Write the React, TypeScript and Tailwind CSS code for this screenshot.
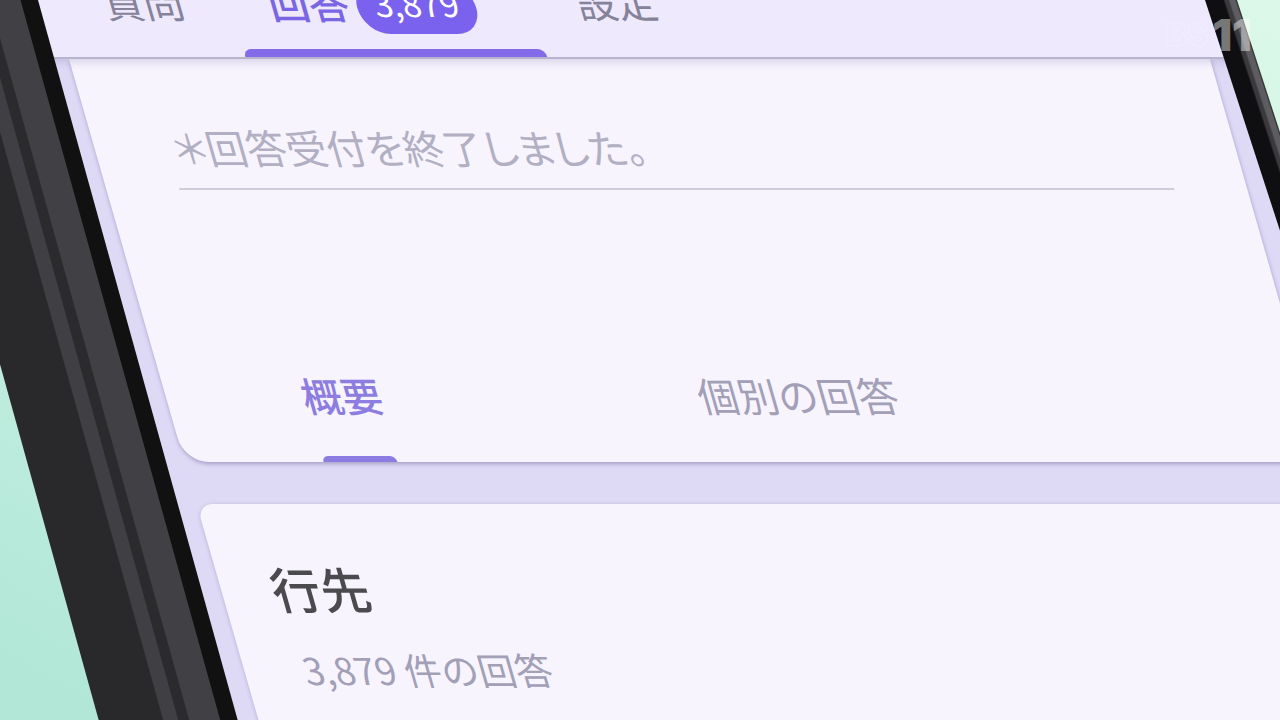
import React, { useState } from 'react'

interface Tab {
  id: string
  label: string
}

const summaryTab: Tab = { id: 'summary', label: '概要' }
const individualTab: Tab = { id: 'individual', label: '個別の回答' }

const LeftFrame: React.FC = () => {
  return (
    <div
      className="z-20 -ml-[101px] w-[139px] shrink-0 origin-top-left skew-x-[15.5deg] bg-[linear-gradient(90deg,#29282b_64px,#403f43_65px_79px,#2b2a2d_80px_90px,#414045_91px_121px,#111111_122px)]"
      aria-hidden="true"
    ></div>
  )
}

const RightFrame: React.FC = () => {
  return (
    <div
      className="z-20 mr-[43px] w-8 shrink-0 origin-top-left skew-x-[18deg] bg-[linear-gradient(90deg,#0f0e10_18px,#3b393d_20px_23px,#5d5c61_25px_30px,#39383b_31px)]"
      aria-hidden="true"
    ></div>
  )
}

const App: React.FC = () => {
  const [page, setPage] = useState('answers')
  const [view, setView] = useState('summary')

  return (
    <main className="relative flex h-screen w-full overflow-hidden bg-linear-to-tr from-[#b2e7d8] from-5% via-[#c8f1e2] via-40% to-[#dbf8e8] font-['Noto_Sans_CJK_JP','Noto_Sans',sans-serif]">
      <LeftFrame />

      {/* スマホの画面 */}
      <div className="z-10 -ml-2 -mr-4 flex min-w-0 flex-1 origin-top-left skew-x-[16deg] flex-col self-start bg-[#dedaf6]">
        <header className="relative z-10 flex h-[59px] items-end border-b-2 border-[#b8b4d0] bg-[#eee9fd] pl-[72px] text-[40px] leading-[48px] whitespace-nowrap shadow-[0_3px_8px_rgba(120,110,160,0.25)]">
          <button type="button" onClick={() => setPage('questions')} className="mb-8 text-[#85829a]">
            質問
          </button>
          <button
            type="button"
            onClick={() => setPage('answers')}
            aria-current={page === 'answers'}
            className="ml-[47px] flex w-[302px] flex-col px-[38px] font-medium text-[#7a66e4]"
          >
            <span className="flex items-end gap-2">
              <span className="pb-2">回答</span>
              <span className="flex h-[52px] w-[119px] items-center justify-center rounded-full bg-[#7b62ee] pb-[10px] text-[34px] font-normal text-white">
                3,879
              </span>
            </span>
            <span className="-mx-[38px] mt-[15px] h-2 self-stretch rounded-t-lg bg-[#826ae9]"></span>
          </button>
          <button type="button" onClick={() => setPage('settings')} className="mb-8 ml-[44px] text-[#85829a]">
            設定
          </button>
        </header>

        <section className="mr-7 ml-[22px] rounded-b-3xl bg-[#f7f4fe] shadow-[0_2px_4px_rgba(110,100,150,0.5)]">
          <p className="mx-[73px] border-b-2 border-[#cfccdc] pt-16 pb-[17px] pl-[6px] text-[40px] leading-[48px] text-[#b2afc3] [font-feature-settings:'palt']">
            ＊回答受付を終了しました。
          </p>
          <div className="mt-[181px] flex gap-[316px] pl-[136px] text-[40px] leading-[48px]">
            <button
              type="button"
              onClick={() => setView(summaryTab.id)}
              aria-pressed={view === summaryTab.id}
              className="flex flex-col items-center font-medium text-[#8d7de0]"
            >
              {summaryTab.label}
              <span className="mt-[37px] h-[6px] w-[74px] rounded-t-md bg-[#8c7be0]"></span>
            </button>
            <button
              type="button"
              onClick={() => setView(individualTab.id)}
              aria-pressed={view === individualTab.id}
              className="pb-[43px] text-[#a29fb7]"
            >
              {individualTab.label}
            </button>
          </div>
        </section>

        <section className="mt-[42px] mr-7 ml-[22px] rounded-2xl bg-[#f7f4fe] pt-[54px] pb-20 pl-[50px] shadow-[0_1px_4px_rgba(110,100,150,0.4)]">
          <h2 className="text-[49px] leading-[60px] font-medium text-[#4b4a4e]">行先</h2>
          <p className="mt-[27px] ml-[9px] text-[37px] leading-[48px] text-[#a29fb7]">3,879 件の回答</p>
        </section>
      </div>

      <RightFrame />

      {/* 局ロゴ */}
      <div className="absolute top-[11px] right-7 z-30 flex items-center gap-1 font-['Inter',sans-serif] leading-[48px] font-black">
        <span className="text-[32px] text-transparent [-webkit-text-stroke:1px_rgba(255,255,255,0.25)]">BS</span>
        <span className="text-[44px] text-white/45">11</span>
      </div>
    </main>
  )
}

export default App
